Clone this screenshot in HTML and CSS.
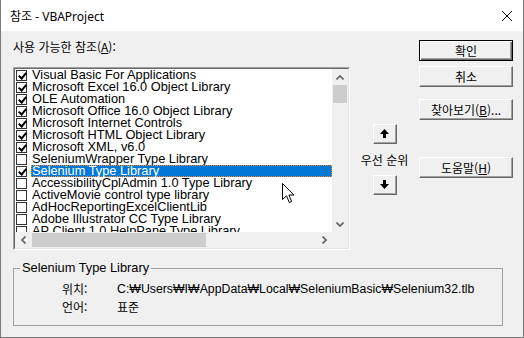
FILE: index.html
```html
<!DOCTYPE html>
<html lang="ko">
<head>
  <meta charset="UTF-8" />
  <title>참조 - VBAProject</title>
  <link rel="stylesheet" href="styles.css">
</head>
<body>
  <div class="window">
    <div class="titlebar">
      <span class="title">참조 - VBAProject</span>
      <svg class="close" width="12" height="12" viewBox="0 0 12 12">
        <path d="M1 1 L11 11 M11 1 L1 11" stroke="#000" stroke-width="1" fill="none" />
      </svg>
    </div>

    <div class="dialog">
      <div class="top">
        <div class="refs">
          <div class="label">사용 가능한 참조(<u>A</u>):</div>
          <div class="listbox">
            <div class="list-inner">
              <ul class="items">
                <li><span class="chk on"></span><span class="name">Visual Basic For Applications</span></li>
                <li><span class="chk on"></span><span class="name">Microsoft Excel 16.0 Object Library</span></li>
                <li><span class="chk on"></span><span class="name">OLE Automation</span></li>
                <li><span class="chk on"></span><span class="name">Microsoft Office 16.0 Object Library</span></li>
                <li><span class="chk on"></span><span class="name">Microsoft Internet Controls</span></li>
                <li><span class="chk on"></span><span class="name">Microsoft HTML Object Library</span></li>
                <li><span class="chk on"></span><span class="name">Microsoft XML, v6.0</span></li>
                <li><span class="chk"></span><span class="name">SeleniumWrapper Type Library</span></li>
                <li class="selected"><span class="chk on"></span><span class="name">Selenium Type Library</span></li>
                <li><span class="chk"></span><span class="name">AccessibilityCplAdmin 1.0 Type Library</span></li>
                <li><span class="chk"></span><span class="name">ActiveMovie control type library</span></li>
                <li><span class="chk"></span><span class="name">AdHocReportingExcelClientLib</span></li>
                <li><span class="chk"></span><span class="name">Adobe Illustrator CC Type Library</span></li>
                <li><span class="chk"></span><span class="name">AP Client 1.0 HelpPane Type Library</span></li>
              </ul>
              <div class="vscroll">
                <div class="sb-btn">
                  <svg width="8" height="5" viewBox="0 0 8 5"><path d="M0.5 4.5 L4 1 L7.5 4.5" stroke="#606060" stroke-width="1.6" fill="none" /></svg>
                </div>
                <div class="vthumb"></div>
                <div class="sb-fill"></div>
                <div class="sb-btn">
                  <svg width="8" height="5" viewBox="0 0 8 5"><path d="M0.5 0.5 L4 4 L7.5 0.5" stroke="#606060" stroke-width="1.6" fill="none" /></svg>
                </div>
              </div>
              <div class="hscroll">
                <div class="sb-btn">
                  <svg width="5" height="8" viewBox="0 0 5 8"><path d="M4.5 0.5 L1 4 L4.5 7.5" stroke="#606060" stroke-width="1.6" fill="none" /></svg>
                </div>
                <div class="hthumb"></div>
                <div class="sb-fill"></div>
                <div class="sb-btn">
                  <svg width="5" height="8" viewBox="0 0 5 8"><path d="M0.5 0.5 L4 4 L0.5 7.5" stroke="#606060" stroke-width="1.6" fill="none" /></svg>
                </div>
              </div>
              <div class="corner"></div>
            </div>
          </div>
        </div>

        <div class="priority">
          <button class="btn arrow">
            <svg width="9" height="10" viewBox="0 0 9 10"><polygon points="4.5,0 9,5 6,5 6,9 3,9 3,5 0,5" fill="#000" /></svg>
          </button>
          <span class="priority-label">우선 순위</span>
          <button class="btn arrow">
            <svg width="9" height="10" viewBox="0 0 9 10"><polygon points="3,0 6,0 6,4 9,4 4.5,9 0,4 3,4" fill="#000" /></svg>
          </button>
        </div>

        <div class="actions">
          <button class="btn default">확인</button>
          <button class="btn cancel">취소</button>
          <button class="btn browse">찾아보기(<u>B</u>)...</button>
          <button class="btn help">도움말(<u>H</u>)</button>
        </div>
      </div>

      <fieldset class="info">
        <legend>Selenium Type Library</legend>
        <div class="info-grid">
          <span>위치:</span><span class="path">C:₩Users₩I₩AppData₩Local₩SeleniumBasic₩Selenium32.tlb</span>
          <span>언어:</span><span>표준</span>
        </div>
      </fieldset>
    </div>

    <svg class="cursor" width="14" height="21" viewBox="0 0 14 21">
      <path d="M0.5 0.5 L0.5 16.5 L4.5 12.8 L7.3 19.5 L9.6 18.5 L6.9 12 L12 12 Z" fill="#fff" stroke="#000" stroke-width="1" stroke-linejoin="miter" />
    </svg>
  </div>
</body>
</html>
```

FILE: styles.css
```css
* {
  box-sizing: border-box;
}

body {
  margin: 0;
  font-family: "Liberation Sans", "Noto Sans CJK KR", sans-serif;
  font-size: 12px;
  color: #000;
}

.window {
  position: relative;
  width: 524px;
  height: 338px;
  background-color: #f0f0f0;
  border: 1px solid #7a7a7a;
  border-top: none;
  overflow: hidden;
}

/* title bar */
.titlebar {
  height: 31px;
  background-color: #fff;
  display: flex;
  align-items: center;
  justify-content: space-between;
  padding: 0 9px 0 9px;
}

.title {
  font-family: "Noto Sans", "Noto Sans CJK KR", sans-serif;
  font-size: 12px;
}

.close {
  margin-right: 1px;
}

/* top area */
.top {
  display: flex;
  height: 219px;
}

.refs {
  margin-left: 12px;
  width: 337px;
}

.label {
  margin-top: 8px;
  height: 16px;
  line-height: 16px;
  font-family: "Noto Sans CJK KR", sans-serif;
}

.listbox {
  margin-top: 12px;
  height: 183px;
  border: 1px solid;
  border-color: #a0a0a0 #fff #fff #a0a0a0;
}

.list-inner {
  height: 100%;
  border: 1px solid;
  border-color: #696969 #e3e3e3 #e3e3e3 #696969;
  background-color: #fff;
  display: grid;
  grid-template-columns: 1fr 16px;
  grid-template-rows: 1fr 16px;
}

.items {
  list-style: none;
  margin: 0;
  padding: 0;
  overflow: hidden;
  font-size: 12.8px;
}

.items li {
  display: flex;
  align-items: center;
  height: 12px;
  white-space: nowrap;
}

.chk {
  flex: none;
  position: relative;
  width: 11px;
  height: 11px;
  margin-left: 1px;
  margin-right: 4px;
  border: 1px solid #333;
  background-color: #fff;
}

.chk.on::after {
  content: "";
  position: absolute;
  left: 2.5px;
  top: 0px;
  width: 3px;
  height: 6px;
  border: solid #000;
  border-width: 0 2px 2px 0;
  transform: rotate(40deg);
}

.name {
  flex: 1;
  height: 12px;
  line-height: 12px;
  padding-left: 1px;
}

.items li.selected .name {
  background-color: #0078d7;
  color: #fff;
  border: 1px dotted #ff8728;
  line-height: 10px;
  padding-left: 0;
}

.vscroll {
  background-color: #f0f0f0;
  display: flex;
  flex-direction: column;
}

.hscroll {
  background-color: #f0f0f0;
  display: flex;
}

.sb-btn {
  flex: none;
  width: 16px;
  height: 16px;
  display: flex;
  align-items: center;
  justify-content: center;
}

.sb-fill {
  flex: 1;
}

.vthumb {
  height: 18px;
  margin: 0 1px;
  background-color: #cdcdcd;
}

.hthumb {
  width: 174px;
  margin: 1px 0 1px 1px;
  background-color: #cdcdcd;
}

.corner {
  background-color: #f0f0f0;
}

/* priority arrows */
.priority {
  width: 69px;
  display: flex;
  flex-direction: column;
  align-items: center;
  padding-top: 93px;
}

.priority-label {
  font-family: "Noto Sans CJK KR", sans-serif;
  height: 16px;
  line-height: 16px;
  margin: 8px 0 7px;
}

/* buttons */
.btn {
  font-family: "Noto Sans CJK KR", sans-serif;
  font-size: 12px;
  color: #000;
  background-color: #f0f0f0;
  border: 1px solid;
  border-color: #fff #696969 #696969 #fff;
  box-shadow: inset -1px -1px 0 #a0a0a0;
  padding: 0;
  margin: 0;
  display: flex;
  align-items: center;
  justify-content: center;
}

.arrow {
  width: 24px;
  height: 20px;
}

.actions {
  width: 94px;
  display: flex;
  flex-direction: column;
}

.actions .btn {
  width: 94px;
  height: 21px;
  line-height: 19px;
}

.btn.default {
  margin-top: 9px;
  border-color: #000;
  box-shadow: inset 1px 1px 0 #fff, inset -1px -1px 0 #696969, inset -2px -2px 0 #a0a0a0;
}

.btn.cancel {
  margin-top: 5px;
}

.btn.browse {
  margin-top: 12px;
}

.btn.help {
  margin-top: 37px;
}

/* info group */
.info {
  margin: 11px 0 0 12px;
  width: 490px;
  height: 65px;
  padding: 0;
  border: 1px solid #a0a0a0;
}

.info legend {
  margin-left: 6px;
  padding: 0 2px;
  line-height: 14px;
  font-size: 12.8px;
  font-family: "Liberation Sans", sans-serif;
}

.info-grid {
  display: grid;
  grid-template-columns: 55px 1fr;
  padding: 5px 0 0 48px;
  font-family: "Noto Sans CJK KR", sans-serif;
  line-height: 18px;
}

.info-grid .path {
  font-family: "Liberation Sans", "Noto Sans CJK KR", sans-serif;
  font-size: 12.3px;
}

.cursor {
  position: absolute;
  left: 281px;
  top: 183px;
}
```
